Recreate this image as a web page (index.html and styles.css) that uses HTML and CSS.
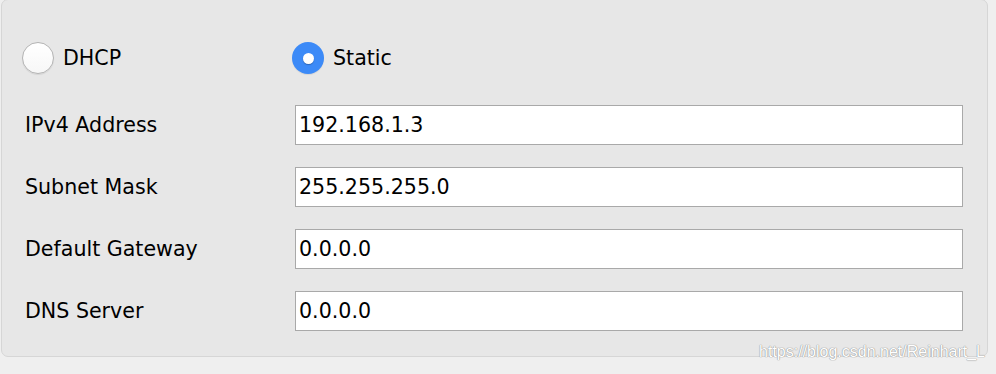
FILE: index.html
```html
<!DOCTYPE html>
<html lang="en">
<head>
    <meta charset="UTF-8">
    <meta name="viewport" content="width=device-width, initial-scale=1.0">
    <title>IP Configuration</title>
    <link rel="stylesheet" href="styles.css">
</head>
<body>
    <div class="panel">
        <div class="modos">
            <label class="opcion">
                <span class="radio"></span>
                <span>DHCP</span>
            </label>
            <label class="opcion">
                <span class="radio activo"></span>
                <span>Static</span>
            </label>
        </div>

        <div class="campos">
            <span class="etiqueta">IPv4 Address</span>
            <div class="entrada">192.168.1.3</div>

            <span class="etiqueta">Subnet Mask</span>
            <div class="entrada">255.255.255.0</div>

            <span class="etiqueta">Default Gateway</span>
            <div class="entrada">0.0.0.0</div>

            <span class="etiqueta">DNS Server</span>
            <div class="entrada">0.0.0.0</div>
        </div>
    </div>

    <div class="marca">https://blog.csdn.net/Reinhart_L</div>
</body>
</html>
```

FILE: styles.css
```css
body {
    font-family: "DejaVu Sans", sans-serif;
    font-size: 20.6px;
    margin: 0;
    padding: 0;
    background-color: #efefef;
    color: #000;
    width: 996px;
    height: 374px;
    overflow: hidden;
}
.panel {
    box-sizing: border-box;
    width: 987px;
    height: 358px;
    margin-top: -1px;
    margin-left: 1px;
    padding: 42px 23px 0 20px;
    background-color: #e7e7e7;
    border: 1px solid #d6d6d6;
    border-radius: 7px;
}
.modos {
    display: flex;
    height: 32px;
}
.opcion {
    display: flex;
    align-items: center;
    gap: 9px;
    width: 270px;
}
.radio {
    box-sizing: border-box;
    width: 32px;
    height: 32px;
    border-radius: 50%;
    border: 1px solid #b4b4b4;
    background: linear-gradient(#ffffff, #f7f7f7);
    box-shadow: 0 1px 1px rgba(0,0,0,0.08);
}
.radio.activo {
    border: none;
    background: #3c8af7;
    display: flex;
    align-items: center;
    justify-content: center;
}
.radio.activo::after {
    content: "";
    width: 11px;
    height: 11px;
    border-radius: 50%;
    background: white;
    box-shadow: 0 1px 1px rgba(0,0,0,0.25);
}
.campos {
    display: grid;
    grid-template-columns: 273px 668px;
    grid-auto-rows: 40px;
    row-gap: 22px;
    margin-top: 31px;
    align-items: center;
}
.etiqueta {
    padding-left: 3px;
}
.entrada {
    box-sizing: border-box;
    height: 40px;
    padding: 0 3px;
    background-color: white;
    border: 1px solid #a9a9a9;
    display: flex;
    align-items: center;
}
.marca {
    position: absolute;
    right: 11px;
    top: 343px;
    font-family: "Liberation Sans", Arial, sans-serif;
    font-size: 16px;
    color: #ffffff;
    text-shadow: 0 0 1px #8a8a8a, 0 0 1px #8a8a8a;
}
```
